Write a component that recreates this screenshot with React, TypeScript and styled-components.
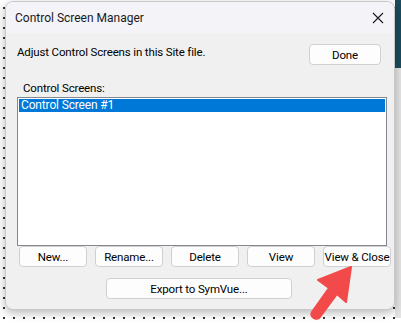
import React from "react";
import styled, { createGlobalStyle } from "styled-components";

const GlobalStyle = createGlobalStyle`
  html, body {
    margin: 0;
    padding: 0;
    background: #ffffff;
  }
  body {
    font-family: Roboto, "Liberation Sans", sans-serif;
  }
`;

// STYLES
const Page = styled.div`
  position: relative;
  width: 401px;
  height: 324px;
  overflow: hidden;
  padding: 1px 0 0 5px;
  box-sizing: border-box;
  background:
    linear-gradient(#1b4b5c, #1b4b5c) right top / 6px 68px no-repeat,
    linear-gradient(#e4e4e4, #e4e4e4) right 68px / 6px 250px no-repeat,
    radial-gradient(circle, #333 0.8px, transparent 1.2px) -1px 3px / 10px 10px,
    #ffffff;
`;

const Dialog = styled.div`
  width: 390px;
  height: 309px;
  border-radius: 8px;
  overflow: hidden;
  background: #f0f0f0;
  border: 1px solid #c8c8c8;
  box-sizing: border-box;
  box-shadow: 0 3px 10px rgba(0, 0, 0, 0.28);
  display: flex;
  flex-direction: column;
`;

const TitleBar = styled.div`
  height: 31px;
  flex-shrink: 0;
  background: #f3f3f8;
  display: flex;
  align-items: center;
  justify-content: space-between;
  padding: 0 9px 0 9px;
  font-size: 12px;
  color: #1a1a1a;
`;

const CloseIcon = styled.svg`
  width: 12px;
  height: 12px;
  margin-right: 1px;
`;

const Body = styled.div`
  flex: 1;
  padding: 11px 7px 0 11px;
  display: flex;
  flex-direction: column;
  font-size: 11.5px;
  color: #000;
  letter-spacing: -0.15px;
`;

const TopRow = styled.div`
  display: flex;
  justify-content: space-between;
  align-items: flex-start;
  padding-right: 6px;
`;

const Label = styled.div<{ $indent?: number; $gap?: number }>`
  padding-left: ${(p) => p.$indent ?? 0}px;
  margin-top: ${(p) => p.$gap ?? 0}px;
  line-height: 14px;
`;

const Button = styled.button<{ $width: number }>`
  width: ${(p) => p.$width}px;
  height: 21px;
  flex-shrink: 0;
  background: #fdfdfd;
  border: 1px solid #d0d0d0;
  border-radius: 4px;
  font-family: Roboto, "Liberation Sans", sans-serif;
  font-size: 11.5px;
  letter-spacing: -0.15px;
  white-space: nowrap;
  color: #000;
  padding: 0;
  line-height: 18px;
`;

const ListBox = styled.div`
  margin-top: 2px;
  height: 149px;
  background: #ffffff;
  border: 1px solid #828790;
  box-sizing: border-box;
  padding: 1px;
`;

const ListItem = styled.div<{ $selected?: boolean }>`
  height: 13px;
  line-height: 13px;
  padding-left: 2px;
  font-size: 12px;
  background: ${(p) => (p.$selected ? "#0078d7" : "transparent")};
  color: ${(p) => (p.$selected ? "#ffffff" : "#000")};
`;

const ButtonRow = styled.div`
  display: flex;
  gap: 8px;
  padding-left: 2px;
`;

const CenterRow = styled.div`
  display: flex;
  justify-content: center;
  margin-top: 11px;
  padding-right: 6px;
`;

const Arrow = styled.svg`
  position: absolute;
  left: 300px;
  top: 262px;
  width: 70px;
  height: 62px;
`;

const App: React.FC = () => {
  return (
    <Page>
      <GlobalStyle />
      <Dialog>
        <TitleBar>
          <span>Control Screen Manager</span>
          <CloseIcon viewBox="0 0 12 12">
            <path d="M1 1 L11 11 M11 1 L1 11" stroke="#1a1a1a" strokeWidth="1.1" />
          </CloseIcon>
        </TitleBar>
        <Body>
          <TopRow>
            <Label $gap={1}>Adjust Control Screens in this Site file.</Label>
            <Button $width={72}>Done</Button>
          </TopRow>
          <Label $indent={6} $gap={16}>
            Control Screens:
          </Label>
          <ListBox>
            <ListItem $selected>Control Screen #1</ListItem>
          </ListBox>
          <ButtonRow>
            <Button $width={68}>New...</Button>
            <Button $width={68}>Rename...</Button>
            <Button $width={68}>Delete</Button>
            <Button $width={68}>View</Button>
            <Button $width={68}>View &amp; Close</Button>
          </ButtonRow>
          <CenterRow>
            <Button $width={186}>Export to SymVue...</Button>
          </CenterRow>
        </Body>
      </Dialog>
      <Arrow viewBox="0 0 70 62">
        <path
          d="M51 5 L18 18 L29 26 L12 50 Q10 54 14 56 Q18 58 20 55 L37 32 L46 40 Z"
          fill="#f24a4a"
          stroke="#f24a4a"
          strokeWidth="2"
          strokeLinejoin="round"
        />
      </Arrow>
    </Page>
  );
};

export default App;
